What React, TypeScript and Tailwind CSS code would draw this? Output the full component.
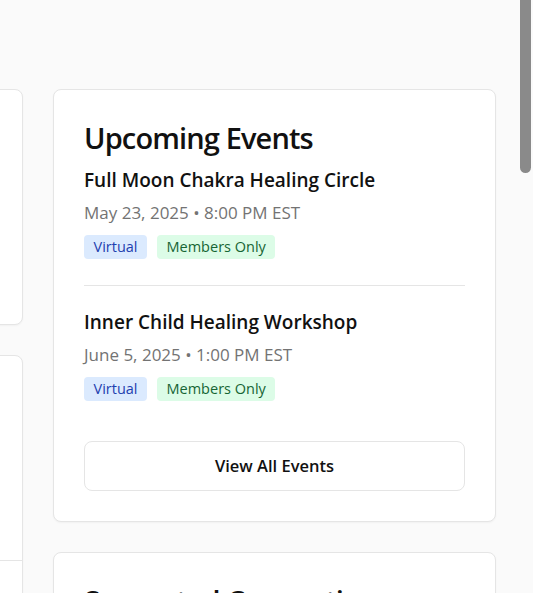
const FONT = "font-['Open_Sans','Noto_Sans',sans-serif]";

type EventItem = {
  title: string;
  when: string;
  tags: { label: string; tone: "blue" | "green" }[];
};

const events: EventItem[] = [
  {
    title: "Full Moon Chakra Healing Circle",
    when: "May 23, 2025 • 8:00 PM EST",
    tags: [
      { label: "Virtual", tone: "blue" },
      { label: "Members Only", tone: "green" },
    ],
  },
  {
    title: "Inner Child Healing Workshop",
    when: "June 5, 2025 • 1:00 PM EST",
    tags: [
      { label: "Virtual", tone: "blue" },
      { label: "Members Only", tone: "green" },
    ],
  },
];

function Tag({ label, tone }: { label: string; tone: "blue" | "green" }) {
  const cls =
    tone === "blue"
      ? "bg-[#dbeafe] text-[#1e40af]"
      : "bg-[#dcfce7] text-[#166534]";
  return (
    <span className={`inline-flex h-6 items-center rounded px-[9.5px] text-[14.5px] ${cls}`}>
      {label}
    </span>
  );
}

function Card({ className = "", children }: { className?: string; children?: React.ReactNode }) {
  return (
    <div
      className={`rounded-lg border border-[#e5e5e5] bg-white shadow-[0_1px_2px_rgba(0,0,0,0.04)] ${className}`}
    >
      {children}
    </div>
  );
}

export default function App() {
  return (
    <div className={`min-h-[2033px] bg-[#fafafa] ${FONT} text-[#111]`}>
      {/* page scrollbar thumb (browser chrome in the shot) */}
      <div className="fixed right-[2px] top-0 h-[173px] w-[11px] rounded-b-full bg-[#8a8a8a]" />

      <div className="flex gap-[30px] pt-[89px] ml-[-377px]">
        {/* left column, mostly off screen */}
        <div className="flex w-[400px] shrink-0 flex-col gap-[30px]">
          <Card className="h-[236px]" />
          <Card className="h-[600px]">
            <div className="h-[205px] border-b border-[#e5e5e5]" />
          </Card>
        </div>

        {/* right column */}
        <div className="flex w-[443px] shrink-0 flex-col gap-[30px]">
          <Card className="p-[30px]">
            <h2 className="text-[29px] font-semibold leading-9 tracking-[-0.03em]">Upcoming Events</h2>
            <div className="mt-2.5">
              {events.map((ev, i) => (
                <div
                  key={ev.title}
                  className={i < events.length - 1 ? "border-b border-[#e5e5e5] pb-[26px]" : "pt-[22px] pb-6"}
                >
                  <h3 className="text-[19px] font-semibold leading-7">{ev.title}</h3>
                  <p className="mt-[7px] text-[17px] leading-6 text-[#737373]">{ev.when}</p>
                  <div className="mt-[10px] flex gap-2.5">
                    {ev.tags.map((t) => (
                      <Tag key={t.label} label={t.label} tone={t.tone} />
                    ))}
                  </div>
                </div>
              ))}
            </div>
            <button className="mt-4 h-[50px] w-full rounded-lg border border-[#e5e5e5] bg-white text-[16.5px] font-semibold text-[#111]">
              View All Events
            </button>
          </Card>

          <Card className="h-[400px] p-[30px]">
            <h2 className="text-[29px] font-semibold leading-9 tracking-[-0.03em]">Suggested Connections</h2>
          </Card>
        </div>
      </div>
    </div>
  );
}
